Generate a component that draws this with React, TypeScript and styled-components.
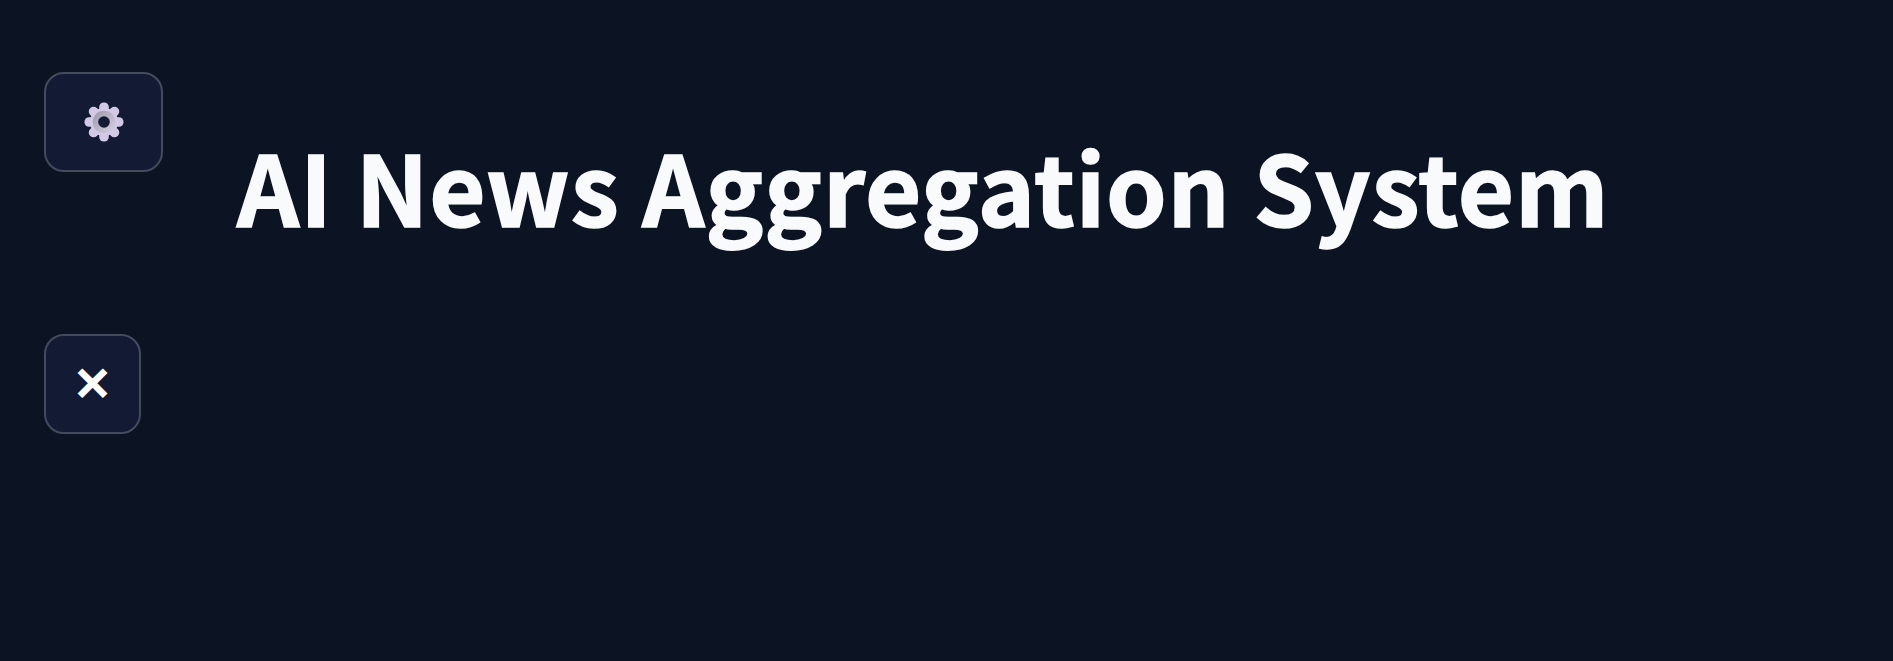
import * as React from 'react';
import styled, { createGlobalStyle } from 'styled-components';

const GlobalStyle = createGlobalStyle`
  html, body {
    margin: 0;
    height: 100%;
    background: #0c1322;
  }
`;

const GearIcon = () => (
  <svg width="40" height="40" viewBox="0 0 40 40">
    <defs>
      <linearGradient id="hub" x1="0" y1="0" x2="1" y2="1">
        <stop offset="0%" stopColor="#9c98aa" />
        <stop offset="100%" stopColor="#d6d1e2" />
      </linearGradient>
    </defs>
    {[0, 45, 90, 135, 180, 225, 270, 315].map((a) => (
      <rect key={a} x="15.2" y="0.5" width="9.6" height="12" rx="4.6" fill="#d3c9e6" transform={`rotate(${a} 20 20)`} />
    ))}
    <circle cx="20" cy="20" r="14" fill="#d3c9e6" />
    <circle cx="20" cy="20" r="11.2" fill="url(#hub)" />
    <circle cx="20" cy="20" r="5.8" fill="#121b33" />
  </svg>
);

const App = () => {
  return (
    <>
      <GlobalStyle />
      <Page>
        <Header>
          <IconButton $width={119}>
            <GearIcon />
          </IconButton>
          <Title>AI News Aggregation System</Title>
        </Header>
        <IconButton $width={97}>
          <CloseGlyph>✕</CloseGlyph>
        </IconButton>
      </Page>
    </>
  );
};

const Page = styled.div`
  box-sizing: border-box;
  height: 661px;
  padding: 72px 0 0 44px;
  display: flex;
  flex-direction: column;
  align-items: flex-start;
  gap: 100px;
  overflow: hidden;
`;

const Header = styled.div`
  display: flex;
  align-items: flex-start;
  gap: 74px;
`;

const IconButton = styled.button<{ $width: number }>`
  box-sizing: border-box;
  width: ${(p) => p.$width}px;
  height: 100px;
  padding: 0;
  display: flex;
  align-items: center;
  justify-content: center;
  background: #121b33;
  border: 2px solid #434b5c;
  border-radius: 20px;
`;

const CloseGlyph = styled.span`
  font-family: 'DejaVu Sans', sans-serif;
  font-size: 46px;
  font-weight: 700;
  line-height: 1;
  color: #ffffff;
  -webkit-text-stroke: 2px #ffffff;
`;

const Title = styled.h1`
  margin: 64px 0 0;
  height: 98px;
  font-family: 'Noto Sans CJK SC', 'Noto Sans CJK JP', sans-serif;
  font-size: 97px;
  font-weight: 700;
  letter-spacing: 0.85px;
  line-height: 98px;
  color: #f8fafc;
  -webkit-text-stroke: 1.6px #f8fafc;
  white-space: nowrap;
`;

export default App;
